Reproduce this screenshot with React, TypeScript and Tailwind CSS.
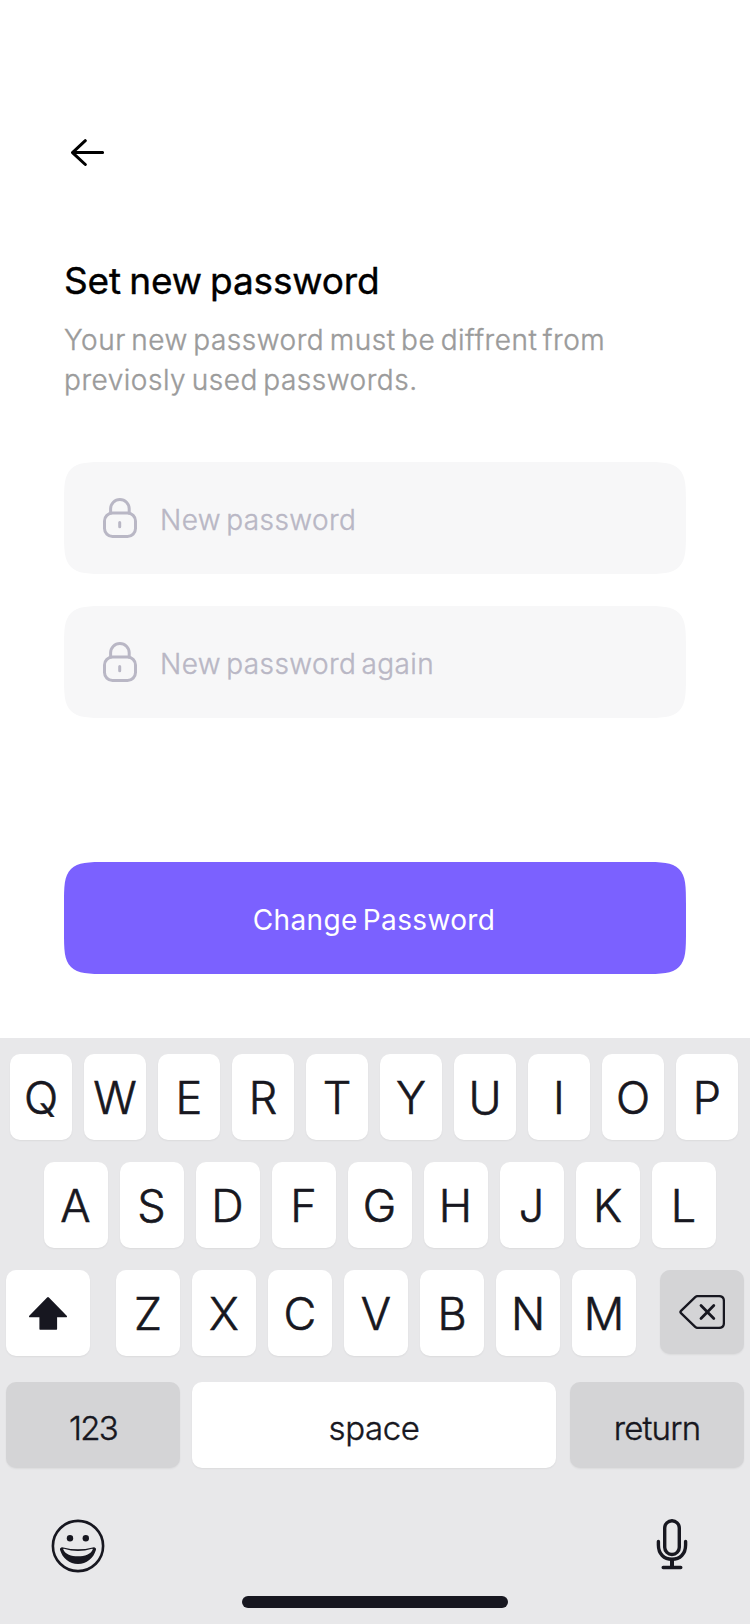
import type { ReactNode } from "react";

const TOP_ROW = ["Q", "W", "E", "R", "T", "Y", "U", "I", "O", "P"];
const HOME_ROW = ["A", "S", "D", "F", "G", "H", "J", "K", "L"];
const BOTTOM_ROW = ["Z", "X", "C", "V", "B", "N", "M"];

function ArrowLeft() {
  return (
    <svg width="34" height="28" viewBox="0 0 34 28" fill="none" stroke="black" strokeWidth="3" strokeLinecap="round" strokeLinejoin="round">
      <path d="M14.3 1.7 1.5 13.6l12.8 11.9M1.8 13.6h29.8" />
    </svg>
  );
}

function Lock() {
  return (
    <svg width="34" height="40" viewBox="0 0 34 40" fill="none" stroke="#b9b7c5" strokeWidth="3" strokeLinecap="round">
      <rect x="1.5" y="15" width="31" height="23.5" rx="8" />
      <path d="M7.6 15v-4.2a9.3 9.3 0 0 1 18.6 0V15M16.7 24.5v4.3" />
    </svg>
  );
}

function Shift() {
  return (
    <svg width="38" height="33" viewBox="0 0 38 33" fill="#171720">
      <path d="M18.1.5a1.3 1.3 0 0 1 1.8 0l17.8 18.3c.6.7.3 1.5-.6 1.5h-9v11.4c0 .7-.3 1-1 1H11.4c-.7 0-1-.3-1-1V20.3H.9c-.9 0-1.2-.8-.6-1.5z" />
    </svg>
  );
}

function Backspace() {
  return (
    <svg width="46" height="34" viewBox="0 0 46 34" fill="none" stroke="#171720" strokeLinejoin="round" strokeLinecap="round">
      <path d="M18.5 1.1H40q4.900 0 4.900 4.900v22q0 4.900-4.900 4.900H18.500q-1.300 0-2.300-1L2 18.100q-1.100-1.100 0-2.200L16.200 2.100q1-1 2.300-1z" strokeWidth="2.300" />
      <path d="m22 10.600 12.800 12.800m0-12.800L22 23.400" strokeWidth="2.800" />
    </svg>
  );
}

function Smiley() {
  return (
    <svg width="54" height="54" viewBox="0 0 54 54">
      <circle cx="27" cy="27" r="25.100" fill="none" stroke="#171720" strokeWidth="2.600" />
      <circle cx="19" cy="19.200" r="3.200" fill="#171720" />
      <circle cx="34.800" cy="19.200" r="3.200" fill="#171720" />
      <path
        fill="#171720"
        fillRule="evenodd"
        d="M10.200 28.400q.8-.3 2 0 14.800 3.800 29.600 0 1.200-.3 2 0 1.700.6 1.200 2.400C42.500 39.500 35.500 45 27 45S11.500 39.500 9 30.800q-.5-1.800 1.200-2.400zM12.300 30.400C14.500 35.400 20 37.200 27 37.200s12.500-1.800 14.700-6.800q.3-.9-.7-.7-14 4.600-28 0-1-.2-.7.7z"
      />
    </svg>
  );
}

function Mic() {
  return (
    <svg width="32" height="51" viewBox="0 0 32 51" fill="none" stroke="#171720" strokeWidth="3.400" strokeLinecap="round">
      <rect x="8.700" y="1.700" width="14.600" height="33.800" rx="7.300" />
      <path d="M2.400 22.500v3.500c0 9 5.600 14.300 13.600 14.300S29.600 35 29.600 26v-3.500M7.200 48.500h17.600" />
      <path d="M16 41v7" strokeWidth="4" strokeLinecap="butt" />
    </svg>
  );
}

function Field({ placeholder }: { placeholder: string }) {
  return (
    <label className="flex h-28 items-center rounded-[44px] bg-[#f7f7f8] pl-[39px] [corner-shape:squircle]">
      <Lock />
      <span className="mt-1 ml-[23px] text-[28px] leading-10 tracking-[0.4px] text-[#b9b7c5] [-webkit-text-stroke:0.4px_#b9b7c5] [word-spacing:-3px]">
        {placeholder}
      </span>
    </label>
  );
}

function Key({ size, children }: { size: string; children: ReactNode }) {
  return (
    <button className={`flex items-center justify-center rounded-[10px] shadow-[0_1px_2px_rgba(0,0,0,0.06)] ${size}`}>
      {children}
    </button>
  );
}

function LetterKeys({ letters, width }: { letters: string[]; width: string }) {
  return (
    <div className="flex gap-3">
      {letters.map((letter) => (
        <Key key={letter} size={`h-[86px] bg-white text-[45px] leading-none [-webkit-text-stroke:0.6px_#171720] ${width}`}>
          {letter}
        </Key>
      ))}
    </div>
  );
}

export default function App() {
  return (
    <div className="flex h-[1624px] w-[750px] flex-col overflow-hidden bg-white font-['Inter',sans-serif]">
      <main className="flex h-[1038px] flex-col px-16 pt-[139px]">
        <button className="flex pl-[7px]" aria-label="Back">
          <ArrowLeft />
        </button>
        <h1 className="mt-[90px] h-12 text-[37px] leading-12 font-normal tracking-[-0.15px] text-black [-webkit-text-stroke:0.4px_black] [word-spacing:-2px]">
          Set new password
        </h1>
        <p className="mt-[15px] text-[28px] leading-10 font-light tracking-[0.52px] text-[#9b9b9b] [-webkit-text-stroke:0.4px_#9b9b9b] [word-spacing:-2.900px]">
          Your new password must be diffrent from
          <br />
          previosly used passwords.
        </p>
        <form className="mt-[62px] flex flex-col gap-8 font-light">
          <Field placeholder="New password" />
          <Field placeholder="New password again" />
          <button
            type="button"
            className="mt-28 h-28 rounded-[44px] bg-[#7b61ff] pt-1 text-[28px] font-normal tracking-[0.35px] text-white [corner-shape:squircle] [word-spacing:-3px]"
          >
            <span className="mr-[2px]">Change Password</span>
          </button>
        </form>
      </main>
      <section className="flex h-[586px] flex-col bg-[#e8e8ea] pt-4 font-light text-[#171720]">
        <div className="flex pl-[10px]">
          <LetterKeys letters={TOP_ROW} width="w-[62px]" />
        </div>
        <div className="mt-[22px] flex pl-[43.5px]">
          <LetterKeys letters={HOME_ROW} width="w-16" />
        </div>
        <div className="mt-[22px] flex items-start justify-between px-[6px]">
          <Key size="h-[86px] w-[84px] bg-white">
            <Shift />
          </Key>
          <div className="ml-[2px]">
            <LetterKeys letters={BOTTOM_ROW} width="w-16" />
          </div>
          <Key size="h-[84px] w-[84px] bg-[#d4d4d6]">
            <Backspace />
          </Key>
        </div>
        <div className="mt-[26px] flex px-[6px] text-[33px] leading-none [-webkit-text-stroke:0.4px_#171720]">
          <Key size="h-[86px] w-[174px] bg-[#d4d4d6] pt-[6px] tracking-[-1.8px]">123</Key>
          <div className="ml-3 flex">
            <Key size="h-[86px] w-[364px] bg-white pt-[6px] tracking-[-0.4px]">space</Key>
          </div>
          <div className="ml-[14px] flex">
            <Key size="h-[86px] w-[174px] bg-[#d4d4d6] pt-[6px] tracking-[-0.8px]">return</Key>
          </div>
        </div>
        <div className="mt-[51px] flex items-start justify-between pr-[62px] pl-[51px]">
          <Smiley />
          <Mic />
        </div>
        <div className="mt-[23px] h-3 w-[266px] self-center rounded-full bg-[#171720]" />
      </section>
    </div>
  );
}
